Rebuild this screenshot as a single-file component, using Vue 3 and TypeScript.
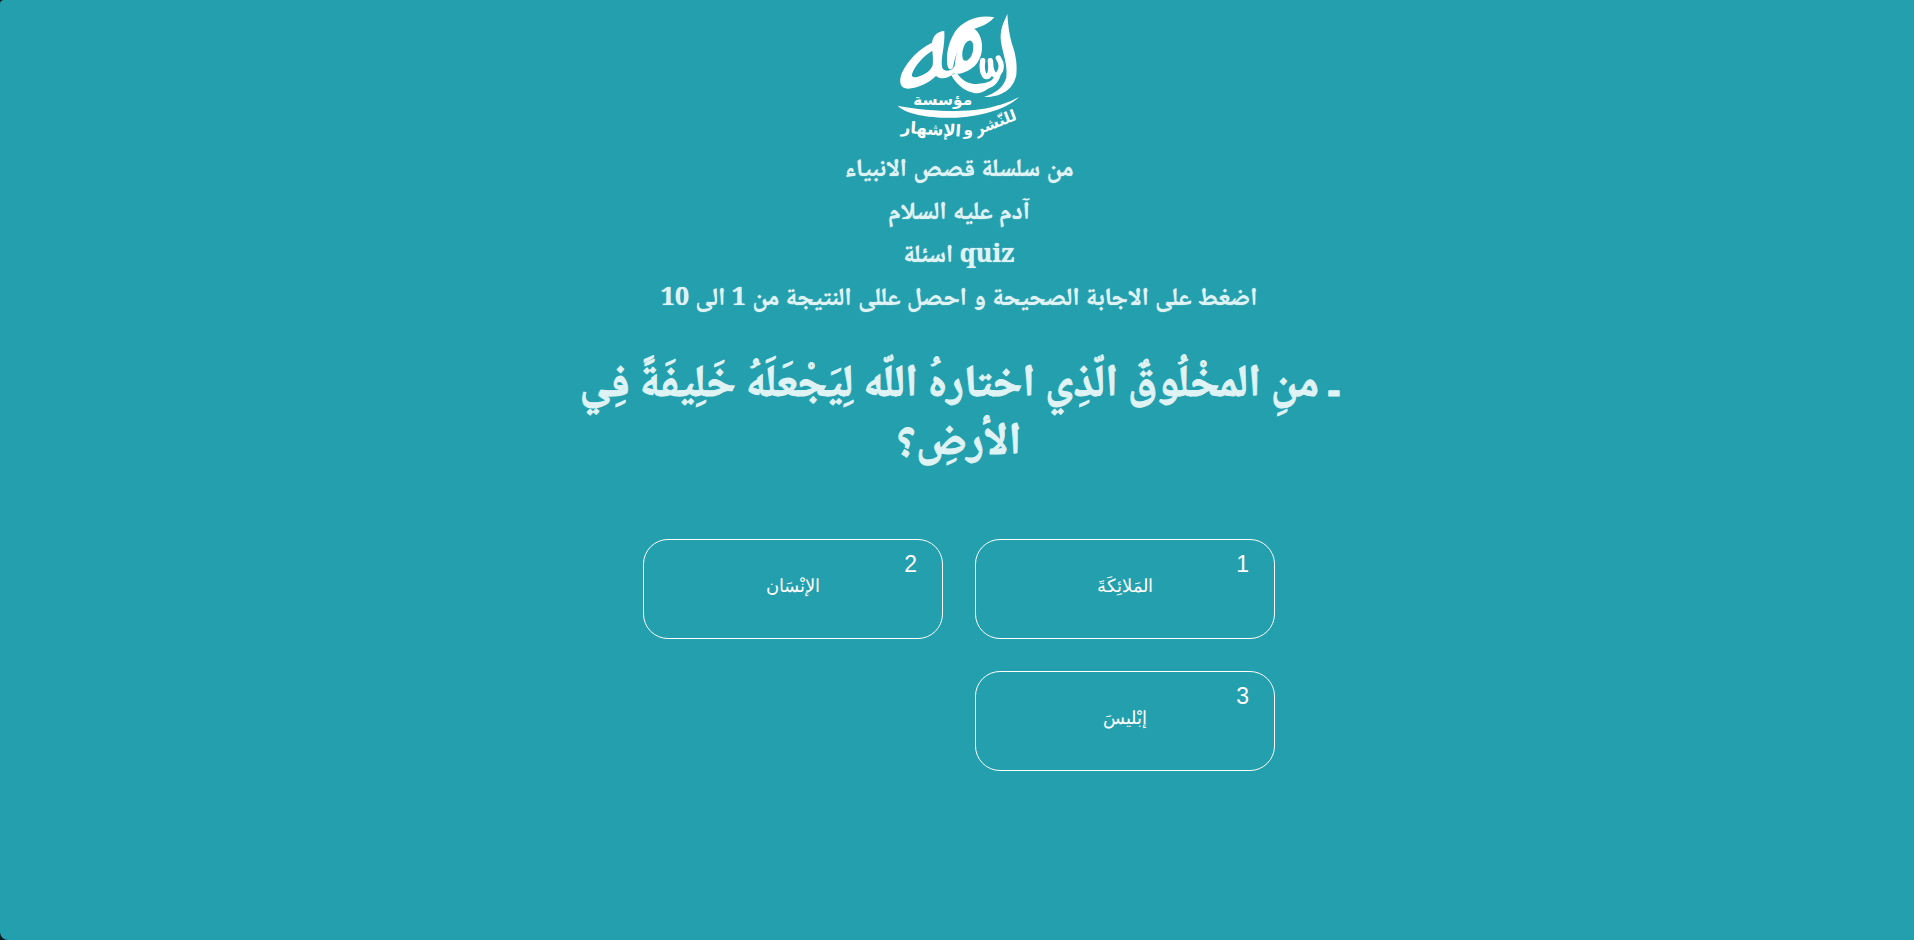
<script setup lang="ts">
const intro: string[] = [
  'من سلسلة قصص الانبياء',
  'آدم عليه السلام',
  'quiz اسئلة',
  'اضغط على الاجابة الصحيحة و احصل عللى النتيجة من 1 الى 10',
]
const question = 'ـ منِ المخْلُوقٌ الّذِي اختارهُ اللّه لِيَجْعَلَهُ خَلِيفَةً فِي الأرضِ؟'
const answers: string[] = ['المَلائِكَةَ', 'الإنْسَان', 'إبْليسَ']
</script>

<template>
  <main class="page" dir="rtl" lang="ar">
    <svg class="logo" viewBox="0 0 465 450" role="img" aria-label="اسمه">
      <path d="M382 42C384 75 388 105 396 132C408 165 412 196 409 224C402 262 372 291 312 291C346 281 372 262 379 232C384 195 368 160 363 126C358 88 372 66 382 42Z" />
      <path d="M343 52C300 42 250 60 225 95C204 128 198 164 202 194C204 208 212 212 219 202C226 165 240 126 264 98C286 80 318 82 343 52Z" />
      <path fill-rule="evenodd" d="M193 93C172 94 160 106 156 128C118 146 84 180 65 220C56 246 60 266 84 266C114 264 146 250 168 228C182 240 204 236 222 220C238 226 266 214 284 198C306 176 311 142 302 114C294 90 276 76 258 84C240 110 230 150 224 198C212 216 194 216 187 204C180 178 196 140 193 93ZM157 152C130 168 104 198 96 222C94 232 102 234 114 230C136 224 152 212 158 196C160 180 158 166 157 152ZM267 122C253 126 246 150 247 168C248 184 257 186 266 178C278 168 282 146 279 132C277 124 272 120 267 122Z" />
      <path d="M230 218C244 240 264 252 290 252C302 250 330 252 350 228C338 262 308 284 282 279C254 274 228 252 214 226Z" />
      <path class="teeth" d="M308 182C304 204 308 226 319 230C331 230 335 210 331 182M333 204C338 224 346 232 356 220C368 206 364 188 355 174M354 224C346 250 326 260 304 262" />
      <path d="M53 317C130 332 240 338 300 328C350 320 390 306 418 290C390 320 320 348 230 353C150 355 80 344 53 317Z" />
      <text x="188" y="314" font-size="46">مؤسسة</text>
      <text x="152" y="404" font-size="49" transform="rotate(4 152 404)">الإشهار</text>
      <text x="265" y="406" font-size="46">و</text>
      <text x="352" y="382" font-size="46" transform="rotate(-21 352 382)">للنّشر</text>
    </svg>
    <h4 v-for="line in intro" :key="line" class="intro">{{ line }}</h4>
    <h2 class="question">{{ question }}</h2>
    <div class="answers">
      <button v-for="(answer, i) in answers" :key="answer" class="answer" type="button">
        <span class="number">{{ i + 1 }}</span>
        <span class="label">{{ answer }}</span>
      </button>
    </div>
  </main>
</template>

<style>
html { background: #0b1a20; }
</style>
<style scoped>
.page {
  min-height: 100vh;
  box-sizing: border-box;
  padding: 0 0 32px 4px;
  display: flex;
  flex-direction: column;
  align-items: center;
  background: #249fad;
  border-radius: 4px 0 0 8px;
  color: #dff2f4;
}
.logo { width: 155px; height: 150px; margin-right: 4px; fill: #fff; }
.logo text { font-family: "DejaVu Sans", sans-serif; font-weight: bold; text-anchor: middle; }
.logo .teeth { fill: none; stroke: #fff; stroke-width: 16; stroke-linecap: round; stroke-linejoin: round; }
.intro {
  margin: 1px 0 12px;
  font: 700 25px/30px "Noto Serif", "Noto Naskh Arabic", "Liberation Serif", serif;
  text-shadow: 0 0 1px #dff2f4;
}
.question {
  margin: 36px 0 65px;
  width: 800px;
  max-width: 100%;
  text-align: center;
  font: 700 45px/58px "Noto Naskh Arabic", "Liberation Serif", serif;
  -webkit-text-stroke: 1px #dff2f4;
}
.answers { display: grid; grid-template-columns: 300px 300px; gap: 32px; }
.answer {
  position: relative;
  height: 100px;
  padding: 0 24px 6px;
  border: 1px solid #fff;
  border-radius: 25px;
  background: none;
  color: #fff;
  font: 18px/24px "Liberation Sans", Arial, sans-serif;
  cursor: pointer;
}
.number { position: absolute; top: 12px; right: 25px; font-size: 23px; }
</style>
